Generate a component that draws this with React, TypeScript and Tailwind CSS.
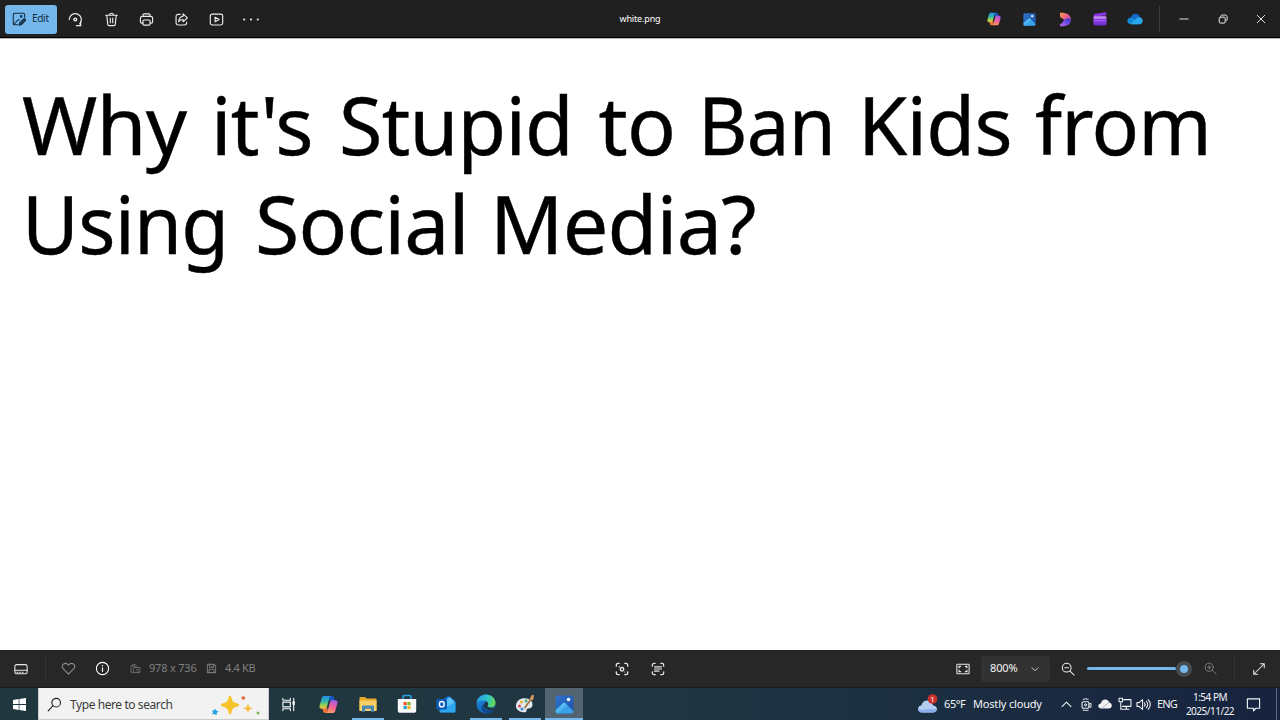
import React from "react";

type IconProps = {
  size?: number;
  className?: string;
  children: React.ReactNode;
};

// stroke icon on a 16 unit grid
function Icon({ size = 14, className = "", children }: IconProps) {
  return (
    <svg
      width={size}
      height={size}
      viewBox="0 0 16 16"
      fill="none"
      stroke="currentColor"
      strokeWidth={1.2}
      strokeLinecap="round"
      strokeLinejoin="round"
      className={`shrink-0 ${className}`}
    >
      {children}
    </svg>
  );
}

function CopilotLogo({ id, size }: { id: string; size: number }) {
  return (
    <svg width={size} height={size} viewBox="0 0 20 20">
      <defs>
        <linearGradient id={`${id}a`} x1="0.3" y1="0" x2="0.3" y2="1">
          <stop offset="0" stopColor="#1f8fe8" />
          <stop offset="0.45" stopColor="#35b8a6" />
          <stop offset="0.75" stopColor="#a5cf4c" />
          <stop offset="1" stopColor="#f2b53a" />
        </linearGradient>
        <linearGradient id={`${id}b`} x1="0.7" y1="0" x2="0.4" y2="1">
          <stop offset="0" stopColor="#a65be8" />
          <stop offset="0.5" stopColor="#ee5f9b" />
          <stop offset="1" stopColor="#fb9a5c" />
        </linearGradient>
      </defs>
      <path d="M10.500 1h3c1.200 0 1.900.7 2.200 1.800l1 3.500h-5.500z" fill="#1557c4" />
      <path d="M9.500 19h-3c-1.200 0-1.900-.7-2.200-1.800l-1-3.500h5.500z" fill="#f0713a" />
      <path d="M5.500 1h7.500c-1.100 0-1.700.8-2 1.900L8.300 12.700c-.4 1.300-1 1.800-2.200 1.800H2.800C.9 14.500.1 13.100.6 11.300L2.900 3.200C3.300 1.800 4.200 1 5.500 1z" fill={`url(#${id}a)`} />
      <path d="M14.500 19H7c1.100 0 1.700-.8 2-1.900l2.700-9.800c.4-1.300 1-1.800 2.200-1.800h3.300c1.900 0 2.700 1.400 2.200 3.200l-2.300 8.100c-.4 1.400-1.300 2.200-2.600 2.200z" fill={`url(#${id}b)`} />
    </svg>
  );
}

function PhotosLogo({ id, size }: { id: string; size: number }) {
  return (
    <svg width={size} height={size} viewBox="0 0 18 18">
      <defs>
        <linearGradient id={`${id}a`} x1="0" y1="0" x2="1" y2="1">
          <stop offset="0" stopColor="#2f74cc" />
          <stop offset="1" stopColor="#1c50a8" />
        </linearGradient>
        <linearGradient id={`${id}b`} x1="0" y1="0" x2="0.6" y2="1">
          <stop offset="0" stopColor="#69d3fa" />
          <stop offset="1" stopColor="#3ba2ec" />
        </linearGradient>
        <clipPath id={`${id}c`}>
          <rect x="0.5" y="0.5" width="17" height="17" rx="2.2" />
        </clipPath>
      </defs>
      <g clipPath={`url(#${id}c)`}>
        <rect width="18" height="18" fill={`url(#${id}a)`} />
        <path d="M0 15L7.500 7.800c.8-.8 1.700-.8 2.500 0l2.300 2.300L4.500 18H0z" fill={`url(#${id}b)`} />
        <path d="M9.500 7.500l8.500 8.300V18H2.500l8-7.500z" fill="#3aa3e8" />
      </g>
      <circle cx="12.800" cy="4.300" r="1.700" fill="#f4f9ff" />
    </svg>
  );
}

function DesignerLogo() {
  return (
    <svg width="14" height="15" viewBox="0 0 14 15">
      <defs>
        <linearGradient id="dsA" x1="0" y1="0" x2="1" y2="0.8">
          <stop offset="0" stopColor="#f6a04d" />
          <stop offset="0.55" stopColor="#ee5f80" />
          <stop offset="1" stopColor="#c64be0" />
        </linearGradient>
        <linearGradient id="dsB" x1="0" y1="1" x2="1" y2="0">
          <stop offset="0" stopColor="#c86cf5" />
          <stop offset="0.6" stopColor="#6648e0" />
          <stop offset="1" stopColor="#4034b5" />
        </linearGradient>
      </defs>
      <path d="M1.800.8C8 .2 12.800 2.500 13 8c-.8 1.500-2 2-3.500 1.900C6.500 9.700 5.800 6.200 2.300 5.400z" fill="url(#dsA)" />
      <path d="M13 7.500c.2 4.300-4 7.300-10.600 6.800L1.900 12c3.300-.3 3-5 6.500-5.600 1.800-.3 3.700 0 4.600 1.100z" fill="url(#dsB)" />
    </svg>
  );
}

function ClipchampLogo() {
  return (
    <svg width="14" height="14" viewBox="0 0 14 14">
      <defs>
        <linearGradient id="ccA" x1="0" y1="0" x2="0" y2="1">
          <stop offset="0" stopColor="#d29cff" />
          <stop offset="0.5" stopColor="#9b4df0" />
          <stop offset="1" stopColor="#6522c8" />
        </linearGradient>
      </defs>
      <path d="M.6 3.200c0-.6.3-1 1-1.200L12.300.3c.6-.1 1 .2 1 .8v2.200L.6 4.800z" fill="#8a35e5" />
      <rect x="0.5" y="4.300" width="13" height="9.200" rx="1.400" fill="url(#ccA)" />
      <path d="M.5 7.500h13M.5 10.400h13" stroke="#6a27cf" strokeWidth="0.7" />
    </svg>
  );
}

function OneDriveLogo() {
  return (
    <svg width="16" height="12" viewBox="0 0 16 12">
      <path d="M4 5C4.200 2.500 6 .7 8.500.7c2.200 0 3.900 1.300 4.500 3.500L8 8z" fill="#1269c9" />
      <path d="M3.900 11.300C1.900 11.300.3 9.800.3 8c0-2 1.700-3.500 3.700-3.500 1 0 1.700.3 2.500.8l6.300 5.400c-.6.4-1 .6-1.700.6z" fill="#1488d8" />
      <path d="M6.500 8l3.700-3.200c2.900-1.400 5.500.5 5.500 3.200 0 1.900-1.400 3.300-3.200 3.300H3.900z" fill="#28a8ea" />
    </svg>
  );
}

function TitleBar() {
  return (
    <header className="grid h-[38px] shrink-0 grid-cols-[1fr_60px_1fr] border-b border-black bg-[#202020] pt-px text-[#ededed]">
      <div className="flex items-center pl-[5px]">
        <button className="mr-[1.4px] flex h-[29px] w-[52px] items-center gap-[6px] rounded-[3px] bg-[#74b7ec] pl-[7px] text-[10px] text-[#102a3d]">
          <Icon size={14}>
            <path d="M7 14.500H3a1.500 1.500 0 0 1-1.500-1.500V3A1.500 1.500 0 0 1 3 1.500h10A1.500 1.500 0 0 1 14.500 3v3" />
            <path d="M2 14l4.800-4.800c.6-.6 1.200-.6 1.800 0" />
            <circle cx="10.500" cy="5" r="0.9" />
            <path d="M8.300 15l.6-2.700 4.300-4.300c1.400-1 3 .6 2 2l-4.300 4.300z" fill="currentColor" fillOpacity="0.8" />
          </Icon>
          <span className="-mt-px tracking-[-0.3px]">Edit</span>
        </button>
        <div className="grid grid-cols-[repeat(6,35.1px)] place-items-center">
          <Icon size={15}>
            <path d="M1.300 8A6.500 6.500 0 1 1 12.500 12.700" strokeWidth={1.3} />
            <path d="M9 14.600h4.500V10.300" strokeWidth={1.3} />
            <circle cx="7.800" cy="8" r="1.500" strokeWidth={1.5} />
          </Icon>
          <Icon size={15}>
            <path d="M1.800 3.500h12.400M6 3.300a2 2 0 0 1 4 0M3 3.700l1 9.500c.1.900.6 1.300 1.400 1.300h5.200c.8 0 1.300-.4 1.400-1.300l1-9.500M6.700 6.500v5M9.300 6.500v5" />
          </Icon>
          <Icon size={15}>
            <path d="M4.200 4.500V3.300c0-.8.5-1.300 1.300-1.300h5c.8 0 1.300.5 1.300 1.300v1.200" />
            <path d="M4.200 11.800H3A1.500 1.500 0 0 1 1.500 10.300V6.700c0-1.300.8-2.100 2-2.100h9c1.200 0 2 .8 2 2.100v3.600a1.500 1.500 0 0 1-1.500 1.500h-1.200" />
            <rect x="4.200" y="8.500" width="7.600" height="5.500" rx="1.200" />
          </Icon>
          <Icon size={15}>
            <path d="M6.500 2.500h-2a2.300 2.300 0 0 0-2.300 2.300v6.700a2.300 2.300 0 0 0 2.300 2.300h6.700a2.300 2.300 0 0 0 2.300-2.300v-.7" />
            <path d="M9.700 2l4.600 4.200-4.600 4.200V8c-2 0-3.500.7-4.700 2.300.2-3.200 1.600-5.400 4.700-5.900z" />
          </Icon>
          <Icon size={15}>
            <rect x="1.400" y="2.200" width="13.200" height="11.600" rx="2" />
            <path d="M6.500 5.500v5l4.200-2.500z" />
          </Icon>
          <Icon size={16}>
            <g fill="currentColor" stroke="none">
              <circle cx="1.200" cy="8.500" r="1.100" />
              <circle cx="8" cy="8.500" r="1.100" />
              <circle cx="14.800" cy="8.500" r="1.100" />
            </g>
          </Icon>
        </div>
      </div>
      <div className="flex items-center justify-center text-[9px] tracking-[-0.15px] text-white">white.png</div>
      <div className="flex items-center justify-end">
        <div className="grid grid-cols-[repeat(5,35.4px)] place-items-center">
          <CopilotLogo id="cpTop" size={14} />
          <PhotosLogo id="phTop" size={13} />
          <DesignerLogo />
          <ClipchampLogo />
          <OneDriveLogo />
        </div>
        <div className="ml-[6px] mr-[5px] h-[26px] w-px bg-[#3a3a3a]" />
        <div className="grid grid-cols-[repeat(3,38.3px)] place-items-center">
          <Icon size={10}>
            <path d="M1.500 8h13" strokeWidth={1.5} />
          </Icon>
          <Icon size={10}>
            <rect x="2" y="5" width="9.500" height="9.500" rx="1.800" strokeWidth={1.6} />
            <path d="M5 2.500c.4-.6 1-.9 1.800-.9h4.700c1.800 0 3 1.200 3 3v4.700c0 .8-.3 1.400-.9 1.800" strokeWidth={1.6} />
          </Icon>
          <Icon size={10}>
            <path d="M2 2l12 12M14 2L2 14" strokeWidth={1.5} />
          </Icon>
        </div>
      </div>
    </header>
  );
}

function StatusBar() {
  return (
    <footer className="flex h-[38px] shrink-0 items-center border-b border-[#1b1b1b] bg-[#272727] text-[11px] text-[#e8e8e8]">
      <div className="flex w-[600px] items-center">
        <Icon size={14} className="ml-[14px]">
          <rect x="1" y="3" width="14" height="10.500" rx="2" />
          <path d="M1 9.500h14" />
          <path d="M3.500 11.600h9" strokeDasharray="1 2" />
        </Icon>
        <div className="ml-[17px] h-[26px] w-px bg-[#343434]" />
        <Icon size={15} className="ml-[15px] text-[#8c8c8c]">
          <path d="M8 14L2.200 8.200C-.7 4.500 4.300.2 8 4.300 11.700.2 16.700 4.500 13.800 8.200z" />
        </Icon>
        <Icon size={15} className="ml-[19px] text-white">
          <circle cx="8" cy="8" r="6.500" />
          <path d="M8 7.300v3.800" />
          <path d="M8 5v.1" strokeWidth={1.5} />
        </Icon>
        <Icon size={11} className="ml-[20px] text-[#767676]">
          <path d="M5 13.500H1.500V4.500h8M3.500 4.500V2.500h4.500M6 6.500h8.500v7.500H6zM9.500 9.500h2v4.500" />
        </Icon>
        <span className="ml-[8px] w-[48px] whitespace-nowrap tracking-[-0.2px] text-[#808080]">978 x 736</span>
        <Icon size={11} className="ml-[9px] text-[#767676]">
          <path d="M2 2h10l2 2v10H2zM5 2v4h6V2M4.500 14V9h7v5" strokeWidth={1.5} />
        </Icon>
        <span className="ml-[8px] whitespace-nowrap tracking-[-0.35px] text-[#808080]">4.4 KB</span>
      </div>

      <div className="flex w-[363px] items-center gap-[21.5px] pl-[15px]">
        <Icon size={14}>
          <path d="M1.500 4.800V3.500a2 2 0 0 1 2-2h1.300M11.200 1.500h1.300a2 2 0 0 1 2 2v1.300M14.500 11.200v1.300a2 2 0 0 1-2 2h-1.300M4.800 14.500H3.500a2 2 0 0 1-2-2v-1.300" strokeWidth={1.5} />
          <circle cx="8" cy="8.300" r="2" strokeWidth={1.5} />
          <path d="M4.600 5.200l.5.400M11.200 11.400v.1" />
        </Icon>
        <Icon size={14}>
          <path d="M1.500 4.800V3.500a2 2 0 0 1 2-2h1.300M11.200 1.500h1.300a2 2 0 0 1 2 2v1.300M14.500 11.200v1.300a2 2 0 0 1-2 2h-1.300M4.800 14.500H3.500a2 2 0 0 1-2-2v-1.300M4 5.500h8M4 8h8M4 10.500h5" strokeWidth={1.4} />
        </Icon>
      </div>

      <div className="-ml-[7px] flex items-center">
        <Icon size={14}>
          <rect x="1" y="2.500" width="14" height="11" rx="0.8" />
          <path d="M3.600 6.500V5h1.600M10.800 5h1.600v1.500M12.400 9.500V11h-1.600M5.200 11H3.600V9.500" strokeWidth={1.5} />
        </Icon>
        <div className="ml-[11px] flex h-[26px] w-[69px] items-center rounded-[3px] bg-[#323232] pl-[9px] text-[#f4f4f4]">
          <span className="w-[41px] tracking-[-0.15px]">800%</span>
          <Icon size={8}>
            <path d="M2 5.500l6 6 6-6" strokeWidth={1.6} />
          </Icon>
        </div>
        <Icon size={14} className="ml-[11px]">
          <circle cx="6.500" cy="6.500" r="5" />
          <path d="M10.300 10.300l4.700 4.700M4.300 6.500h4.400" />
        </Icon>
        <div className="ml-[12px] flex items-center">
          <div className="h-[3px] w-[89px] rounded-full bg-[#74b7ec]" />
          <div className="flex size-4 items-center justify-center rounded-full bg-[#454b51]">
            <div className="size-[8px] rounded-full bg-[#74b7ec]" />
          </div>
        </div>
        <Icon size={13} className="ml-[12px] text-[#7c7c7c]">
          <circle cx="6.500" cy="6.500" r="5" />
          <path d="M10.300 10.300l4.700 4.700M4.300 6.500h4.400M6.500 4.300v4.400" />
        </Icon>
        <div className="ml-[17px] h-[26px] w-px bg-[#343434]" />
        <Icon size={14} className="ml-[17px]">
          <path d="M9.500 2h4.500v4.500M6.500 14H2V9.500M14 2L2 14" />
        </Icon>
      </div>
    </footer>
  );
}

function TaskButton({ open, active, children }: { open?: boolean; active?: boolean; children: React.ReactNode }) {
  return (
    <div className={`flex h-full flex-col items-center ${active ? "w-[38px] bg-[#52646f]" : "w-[39.2px]"}`}>
      <div className="flex h-[30px] items-center pt-[2px]">{children}</div>
      <div className={`h-[2px] ${active ? "w-full" : "w-[32px]"} ${open || active ? "bg-[#76b9ed]" : ""}`} />
    </div>
  );
}

function SearchBox() {
  return (
    <div className="flex h-[32px] w-[231px] items-center border border-[#c9cccd] border-t-[#f2f2f2] bg-[#f2f2f2] pt-px text-[12px] text-[#3c3c3c]">
      <Icon size={15} className="ml-[8px] text-[#222]">
        <circle cx="9.800" cy="6" r="4.600" />
        <path d="M6.500 9.300L1.300 14.700" />
      </Icon>
      <span className="ml-[8px] w-[140px] whitespace-nowrap tracking-[-0.42px]">Type here to search</span>
      <svg width="50" height="24" viewBox="0 0 50 24">
        <path d="M20 2.500c.8 0 1.200 1 1.700 3 .9 3 1.500 3.700 4.500 4.600 2 .6 3 1 3 1.900s-1 1.300-3 1.900c-3 .9-3.600 1.600-4.500 4.600-.5 2-.9 3-1.700 3s-1.200-1-1.700-3c-.9-3-1.500-3.700-4.500-4.600-2-.6-3-1-3-1.900s1-1.300 3-1.900c3-.9 3.600-1.600 4.500-4.600.5-2 .9-3 1.700-3z" fill="#f8c32a" />
        <path d="M38 11c.7 0 .8 2.700 1.500 3.300s3 .6 3 1.200-2.300.6-3 1.200-.8 3.300-1.500 3.300-.8-2.700-1.500-3.300-3-.6-3-1.200 2.300-.6 3-1.200.8-3.300 1.500-3.300z" fill="#f5bf3d" />
        <path d="M5 15.500l1.200 2.100 2.300.6-1.700 1.700-.3 2.300-2-1.100-2.500.3 1-2.200-1-1.800 2.300-.2z" fill="#23a3e0" />
        <circle cx="33.300" cy="5" r="1.800" fill="#e2653f" />
        <circle cx="48" cy="20" r="1.500" fill="#7cb850" />
      </svg>
    </div>
  );
}

function Taskbar() {
  return (
    <nav className="flex h-[32px] shrink-0 items-center bg-linear-to-r from-[#20373f] via-[#203742] to-[#17233f] text-[#f3f5f7]">
      <div className="flex w-[38px] justify-center pt-px">
        <svg width="13" height="13" viewBox="0 0 13 13" fill="#fff">
          <path d="M0 1.900l5.700-.8v5H0zM6.400 1L13 0v6.100H6.400zM0 6.900h5.700v5L0 11.100zM6.400 6.900H13V13l-6.600-.9z" />
        </svg>
      </div>
      <SearchBox />
      <div className="flex h-full items-center">
        <TaskButton>
          <Icon size={15}>
            <path d="M2 1.500v2h8v-2M2 14.500v-2h8v2M2 5.500h8v5H2zM13.500 1.500v13" />
            <path d="M13.500 5.500v2" strokeWidth={2.5} />
          </Icon>
        </TaskButton>
        <div className="w-px" />
        <TaskButton>
          <CopilotLogo id="cpTask" size={19} />
        </TaskButton>
        <TaskButton open>
          <svg width="18" height="17" viewBox="0 0 18 17">
            <path d="M.5 2c0-.6.4-1 1-1H6l1.500 1.500h9c.6 0 1 .4 1 1V15H.5z" fill="#e8a925" />
            <path d="M.5 4.500h17V14c0 .6-.4 1-1 1h-15c-.6 0-1-.4-1-1z" fill="#f8d068" />
            <path d="M3 10.500c0-.6.4-1 1-1h10c.6 0 1 .4 1 1v5.200h-3v-2.200c0-.5-.3-.8-.8-.8H6.800c-.5 0-.8.3-.8.8v2.200H3z" fill="#4b89b8" />
          </svg>
        </TaskButton>
        <TaskButton>
          <svg width="20" height="20" viewBox="0 0 20 20">
            <path d="M6 5.500V3c0-.9.500-1.500 1.400-1.500h5.200c.9 0 1.400.6 1.400 1.500v2.500" fill="none" stroke="#2ba3e8" strokeWidth="1.5" />
            <path d="M.8 5h18.400v11.500c0 1.400-.9 2.300-2.300 2.300H3.100c-1.400 0-2.300-.9-2.300-2.300z" fill="#f7f8f9" />
            <path d="M6.500 8h3.200v3.200H6.500z" fill="#ee5325" />
            <path d="M10.400 8h3.200v3.200h-3.200z" fill="#80b92b" />
            <path d="M6.500 11.900h3.200v3.200H6.500z" fill="#26a0dc" />
            <path d="M10.400 11.900h3.200v3.200h-3.200z" fill="#fbb51d" />
          </svg>
        </TaskButton>
        <TaskButton>
          <svg width="20" height="20" viewBox="0 0 20 20">
            <path d="M3.500 8L12.300 1.500 19.500 7v10c0 .9-.6 1.500-1.500 1.500H5c-.9 0-1.500-.6-1.500-1.500z" fill="#1466bd" />
            <path d="M8 6.500L13.800 3 18 7v5l-8 3z" fill="#5ec1f5" />
            <path d="M3.500 16.500L19.500 8v9c0 .9-.6 1.500-1.500 1.500H5c-.9 0-1.500-.6-1.500-1.500z" fill="#2ba8ee" />
            <rect x="0.5" y="5" width="10.500" height="10.500" rx="1.200" fill="#0d5bb8" />
            <ellipse cx="5.800" cy="10.200" rx="2.400" ry="2.700" fill="none" stroke="#fff" strokeWidth="1.4" />
          </svg>
        </TaskButton>
        <TaskButton open>
          <svg width="20" height="20" viewBox="0 0 20 20">
            <defs>
              <linearGradient id="edA" x1="0" y1="0.3" x2="1" y2="0.5">
                <stop offset="0" stopColor="#259fe5" />
                <stop offset="0.55" stopColor="#2cc3c9" />
                <stop offset="1" stopColor="#69d94f" />
              </linearGradient>
              <linearGradient id="edB" x1="0" y1="0" x2="0.5" y2="1">
                <stop offset="0" stopColor="#2190e2" />
                <stop offset="1" stopColor="#1461b8" />
              </linearGradient>
            </defs>
            <circle cx="10" cy="10" r="9.500" fill="url(#edB)" />
            <path d="M7.500 11c-.4 4.500 3.800 6.500 10.200 4.700C14.500 20.300 9.500 20.300 7 17.800 4.800 15.500 5 11.800 7.800 9.500z" fill="#104a94" />
            <path d="M.6 9C1.200 4 5 .5 10 .5c5.500 0 9.500 4 9.500 8.200 0 3-2.200 4.900-4.900 4.900-1.800 0-3.200-.6-3.200-1.300 0-.5.8-.8.8-2.100 0-2-2-3.900-5-3.900C4.300 6.300 1.800 7.300.6 9z" fill="url(#edA)" />
            <path d="M11.400 12.300c0-.5.8-.8.8-2.100 0-1.100-.7-2.200-1.700-2.900-1.900 1-3 2.900-2.700 4.800.4 2.500 3.500 4.600 8.500 4.200 1.100-.7 1.600-1.500 2.300-2.900-3.500.9-7.200.1-7.200-1.100z" fill="#203742" />
          </svg>
        </TaskButton>
        <TaskButton open>
          <svg width="20" height="20" viewBox="0 0 20 20">
            <path d="M1 11.500C1.300 7 5 4.300 9.500 4.300c5.300 0 8.500 3.200 8 7-.3 2.500-2.200 3.200-4 3.200-1.700 0-2 .9-2 2.300 0 1.300-1.300 1.700-3.300 1.500C3.500 17.800.8 15 1 11.500z" fill="#dfe7ef" />
            <circle cx="4.500" cy="12" r="1.500" fill="#d94848" />
            <circle cx="6.500" cy="8" r="1.500" fill="#f0b22e" />
            <circle cx="11" cy="7" r="1.400" fill="#47a95a" />
            <circle cx="7" cy="15" r="1.500" fill="#3b82d8" />
            <path d="M10 13.500L16.500 4.500" stroke="#a9713f" strokeWidth="1.8" strokeLinecap="round" />
            <path d="M14.800 4.500L17 .8l2 .5-.7 4.200-1.600 1z" fill="#d69a5e" />
          </svg>
        </TaskButton>
        <div className="w-px" />
        <TaskButton active>
          <PhotosLogo id="phTask" size={19} />
        </TaskButton>
      </div>

      <div className="ml-auto flex h-full items-center text-[11px]">
        <svg width="22" height="20" viewBox="0 0 22 20" className="-mt-px">
          <path d="M5 18.500c-2.300 0-4-1.500-4-3.500 0-1.900 1.400-3.300 3.300-3.500C5 8.400 7.300 6.500 10.200 6.500c3 0 5.200 2 5.700 4.700 2.300.2 4 1.700 4 3.700 0 2.100-1.700 3.600-4 3.600z" fill="#b4cdf2" />
          <path d="M1.200 14c.8 2 3 2 6 1.500 4-.6 8-.4 12.600-.8 0 2.200-1.600 3.800-3.900 3.800H5c-2.500 0-4.300-2-3.800-4.500z" fill="#8aafec" />
          <circle cx="15.500" cy="5" r="4.800" fill="#c9302a" />
          <text x="15.500" y="7.800" textAnchor="middle" fontSize="7.5" fill="#fff">1</text>
        </svg>
        <span className="ml-[5px] w-[29px] whitespace-nowrap tracking-[-0.4px]">65°F</span>
        <span className="w-[70px] whitespace-nowrap tracking-[-0.18px]">Mostly cloudy</span>
        <Icon size={11} className="ml-[18px]">
          <path d="M1.500 11L8 4.500l6.500 6.500" strokeWidth={1.5} />
        </Icon>
        <Icon size={13} className="ml-[8px]">
          <rect x="2.500" y="4.500" width="8.500" height="8" rx="1.500" strokeWidth={1.3} />
          <path d="M11 7.500l2.500-1v5l-2.500-1M4 1.700c2-.9 4-.9 6 0M4 15c2 .5 4 .5 6 0" />
          <circle cx="6.800" cy="8.500" r="1.300" />
        </Icon>
        <svg width="14" height="10" viewBox="0 0 14 10" className="ml-[5px]">
          <path d="M3.200 9.500C1.500 9.500.3 8.500.3 7c0-1.400 1-2.500 2.600-2.500C3.500 2 5 .5 7.200.5c2 0 3.500 1.200 4 3 1.600.2 2.600 1.400 2.600 3 0 1.800-1.300 3-3 3z" fill="#f1f1f1" />
          <path d="M4 9l7-5.500" stroke="#b5b9c0" strokeWidth="1" />
        </svg>
        <Icon size={14} className="ml-[5.5px]">
          <path d="M6.500 3h8.300v7.700H5M9.500 10.700v3M6.500 14h6M1.200 1.500h4v4h-4zM3.200 5.500V14H5.500" />
        </Icon>
        <Icon size={15} className="ml-[4px]">
          <path d="M1 6h2.200L7 2.800v10.400L3.200 10H1zM9 6.200c.9 1 .9 2.600 0 3.600M11 4.500c2 2 2 5 0 7M13 2.800c3 3 3 7.400 0 10.400" strokeWidth={1.1} />
        </Icon>
        <span className="ml-[6.5px] w-[19px] tracking-[-0.85px]">ENG</span>
        <div className="ml-[6px] flex w-[56px] flex-col items-center text-[10px] leading-[14px] tracking-[-0.5px]">
          <span>1:54 PM</span>
          <span>2025/11/22</span>
        </div>
        <Icon size={15} className="ml-[8px]">
          <path d="M1.500 2h13v10h-4L8 14.700V12H1.500z" />
        </Icon>
        <div className="ml-[15px] mr-[3px] h-full w-px bg-[#5d6b80]" />
      </div>
    </nav>
  );
}

export default function App() {
  return (
    <div className="flex h-[720px] w-[1280px] flex-col overflow-hidden bg-white font-['Noto_Sans','Open_Sans',sans-serif]">
      <TitleBar />
      <main className="flex-1 border-t border-[#b5b5b5] pl-[22px] pt-[35px] text-black">
        <h1 className="text-[81px] leading-[99.4px] tracking-[-0.8px] whitespace-nowrap [-webkit-text-stroke:0.4px_black]">
          <span className="flex">
            <span className="w-[188.5px] origin-left">Why </span>
            <span className="w-[128px] origin-left scale-x-[0.985]">it's </span>
            <span className="w-[260px] origin-left scale-x-[0.977]">Stupid </span>
            <span className="w-[99.5px] origin-left">to </span>
            <span className="w-[160px] origin-left scale-x-[0.94]">Ban </span>
            <span className="w-[176.5px] origin-left scale-x-[0.983]">Kids </span>
            <span className="w-[190px] origin-left scale-x-[0.972]">from</span>
          </span>
          <span className="flex">
            <span className="w-[232.5px] origin-left scale-x-[0.961]">Using </span>
            <span className="w-[235.5px] origin-left scale-x-[0.995]">Social </span>
            <span className="w-[280px] origin-left">Media?</span>
          </span>
        </h1>
      </main>
      <StatusBar />
      <Taskbar />
    </div>
  );
}
